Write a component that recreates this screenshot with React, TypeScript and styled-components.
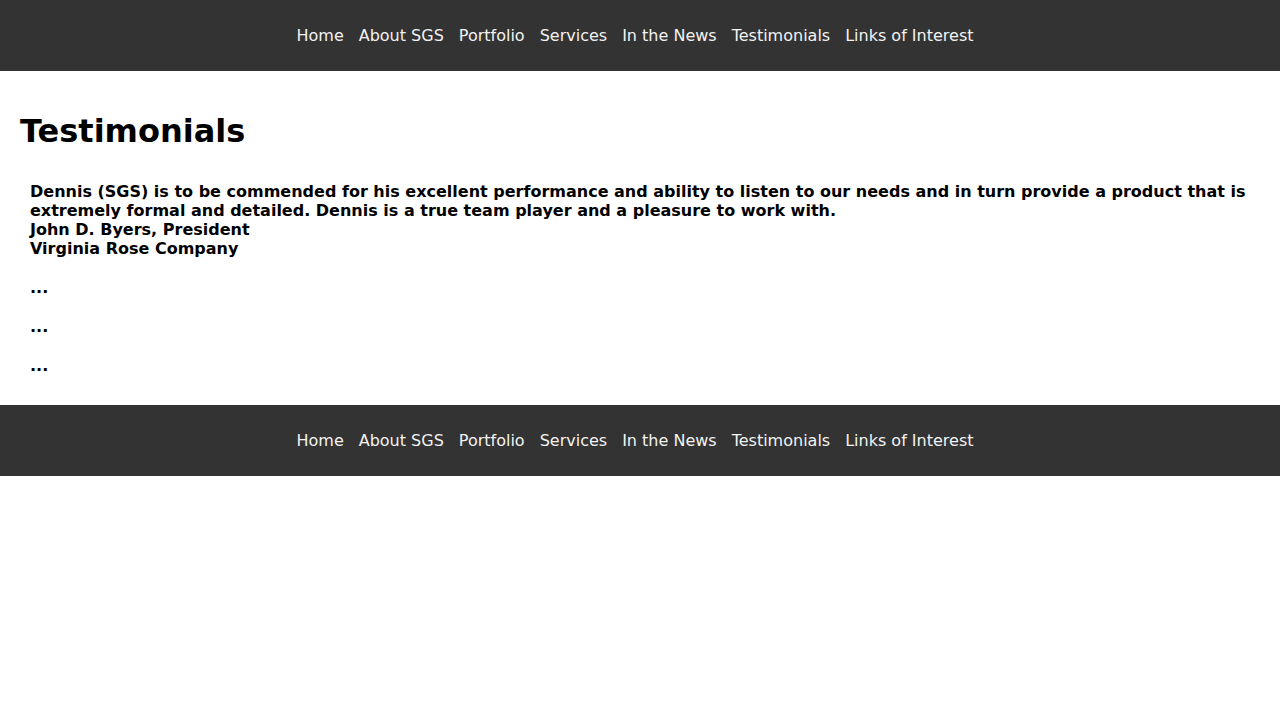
import React from "react";
import styled, { createGlobalStyle } from "styled-components";

const GlobalStyle = createGlobalStyle`
  html, body {
    margin: 0;
    padding: 0;
    background: #ffffff;
    font-family: "DejaVu Sans", "Liberation Sans", sans-serif;
    color: #000000;
  }
`;

const NavBar = styled.nav`
  background: #333333;
  height: 71px;
  display: flex;
  justify-content: center;
  align-items: center;
  gap: 15px;
  padding-right: 10px;
`;

const NavLink = styled.a`
  color: #f2f2f2;
  text-decoration: none;
  font-size: 16px;
  line-height: 19px;
`;

const Main = styled.main`
  padding: 42px 20px 30px;
`;

const Title = styled.h1`
  margin: 0 0 32px;
  font-size: 32px;
  line-height: 37px;
  font-weight: bold;
`;

const List = styled.div`
  display: flex;
  flex-direction: column;
  gap: 20px;
  padding: 0 10px;
`;

const Quote = styled.p`
  margin: 0;
  font-size: 16px;
  line-height: 19px;
  font-weight: bold;
`;

const links = [
  "Home",
  "About SGS",
  "Portfolio",
  "Services",
  "In the News",
  "Testimonials",
  "Links of Interest",
];

const Nav = () => (
  <NavBar>
    {links.map((l) => (
      <NavLink key={l} href="#">
        {l}
      </NavLink>
    ))}
  </NavBar>
);

export default function App() {
  return (
    <>
      <GlobalStyle />
      <Nav />
      <Main>
        <Title>Testimonials</Title>
        <List>
          <Quote>
            Dennis (SGS) is to be commended for his excellent performance and
            ability to listen to our needs and in turn provide a product that is
            extremely formal and detailed. Dennis is a true team player and a
            pleasure to work with.
            <br />
            John D. Byers, President
            <br />
            Virginia Rose Company
          </Quote>
          <Quote>...</Quote>
          <Quote>...</Quote>
          <Quote>...</Quote>
        </List>
      </Main>
      <Nav />
    </>
  );
}
